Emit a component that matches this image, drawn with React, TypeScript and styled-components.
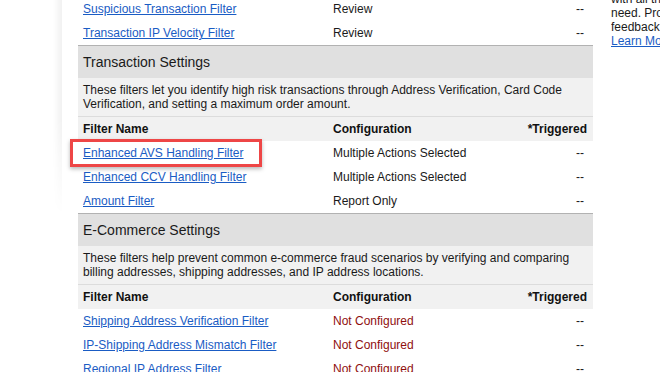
import React from "react";
import styled, { createGlobalStyle } from "styled-components";

const Global = createGlobalStyle`
  html, body {
    margin: 0;
    padding: 0;
    background: #ffffff;
    overflow: hidden;
    width: 660px;
    height: 372px;
  }
  body {
    font-family: "Liberation Sans", Arial, sans-serif;
    font-size: 12px;
    color: #1a1a1a;
  }
`;

const Page = styled.div`
  display: flex;
  align-items: flex-start;
  width: 660px;
  height: 372px;
  overflow: hidden;
`;

const Gutter = styled.div`
  flex: 0 0 78px;
  display: flex;
  justify-content: flex-end;
  padding-right: 16px;
  box-sizing: border-box;
`;

const EdgeShadow = styled.div`
  width: 9px;
  height: 215px;
  background: linear-gradient(to right, rgba(0, 0, 0, 0), rgba(0, 0, 0, 0.055));
  -webkit-mask-image: linear-gradient(to bottom, #000 55%, transparent 100%);
  mask-image: linear-gradient(to bottom, #000 55%, transparent 100%);
`;

const Main = styled.div`
  flex: 0 0 515px;
  margin-top: -3px;
`;

const Row = styled.div<{ $head?: boolean }>`
  display: grid;
  grid-template-columns: 250px 1fr 110px;
  height: 24px;
  align-items: center;
  background: ${(p) => (p.$head ? "#f1f1f1" : "#ffffff")};
  font-weight: ${(p) => (p.$head ? "bold" : "normal")};
  color: ${(p) => (p.$head ? "#111" : "#1a1a1a")};
  line-height: 14px;
`;

const Cell = styled.div<{ $align?: "left" | "right"; $tone?: "warn" }>`
  position: relative;
  padding: 0 5px;
  text-align: ${(p) => (p.$align === "right" ? "right" : "left")};
  color: ${(p) => (p.$tone === "warn" ? "#8f0f0f" : "inherit")};
  white-space: nowrap;
`;

const TriggerCell = styled(Cell)<{ $head?: boolean }>`
  text-align: right;
  padding-right: ${(p) => (p.$head ? "6px" : "9px")};
`;

const FilterLink = styled.a`
  color: #1a5cc4;
  text-decoration: underline;
  cursor: pointer;
`;

const Highlight = styled.span`
  position: absolute;
  left: -8px;
  top: -7px;
  width: 192px;
  height: 28px;
  box-sizing: border-box;
  border: 3px solid #ee4646;
  box-shadow: 0 2px 4px rgba(0, 0, 0, 0.28);
  pointer-events: none;
`;

const Section = styled.section`
  border-top: 1px solid #b2b2b2;
  border-bottom: 1px solid #b2b2b2;
  & + & {
    border-top: none;
  }
`;

const SectionHeader = styled.h2`
  margin: 0;
  height: 32px;
  display: flex;
  align-items: center;
  padding: 0 5px;
  background: #e0e0e0;
  font-size: 14px;
  font-weight: normal;
  color: #1a1a1a;
`;

const Description = styled.p`
  margin: 0;
  padding: 5px 5px;
  height: 39px;
  box-sizing: border-box;
  background: #f1f1f1;
  line-height: 14px;
  color: #1a1a1a;
  border-bottom: 1px solid #dcdcdc;
`;

const Spacer = styled.div`
  flex: 0 0 18px;
`;

const Aside = styled.div`
  flex: 1 1 0;
  min-width: 0;
  overflow: hidden;
  margin-top: -8px;
  line-height: 14px;
  white-space: nowrap;
  color: #1a1a1a;
`;

const AsideLink = styled.a`
  color: #1a5cc4;
  text-decoration: underline;
`;

type FilterRow = { name: string; config: string; warn?: boolean; highlight?: boolean };

const FilterTable: React.FC<{ rows: FilterRow[] }> = ({ rows }) => (
  <>
    <Row $head>
      <Cell>Filter Name</Cell>
      <Cell>Configuration</Cell>
      <TriggerCell $head>*Triggered</TriggerCell>
    </Row>
    {rows.map((r) => (
      <Row key={r.name}>
        <Cell>
          <FilterLink>{r.name}</FilterLink>
          {r.highlight && <Highlight />}
        </Cell>
        <Cell $tone={r.warn ? "warn" : undefined}>{r.config}</Cell>
        <TriggerCell>--</TriggerCell>
      </Row>
    ))}
  </>
);

export default function App() {
  return (
    <>
      <Global />
      <Page>
        <Gutter>
          <EdgeShadow />
        </Gutter>
        <Main>
          <Row>
            <Cell>
              <FilterLink>Suspicious Transaction Filter</FilterLink>
            </Cell>
            <Cell>Review</Cell>
            <TriggerCell>--</TriggerCell>
          </Row>
          <Row>
            <Cell>
              <FilterLink>Transaction IP Velocity Filter</FilterLink>
            </Cell>
            <Cell>Review</Cell>
            <TriggerCell>--</TriggerCell>
          </Row>
          <Section>
            <SectionHeader>Transaction Settings</SectionHeader>
            <Description>
              These filters let you identify high risk transactions through Address Verification, Card Code
              Verification, and setting a maximum order amount.
            </Description>
            <FilterTable
              rows={[
                { name: "Enhanced AVS Handling Filter", config: "Multiple Actions Selected", highlight: true },
                { name: "Enhanced CCV Handling Filter", config: "Multiple Actions Selected" },
                { name: "Amount Filter", config: "Report Only" },
              ]}
            />
          </Section>
          <Section>
            <SectionHeader>E-Commerce Settings</SectionHeader>
            <Description>
              These filters help prevent common e-commerce fraud scenarios by verifying and comparing billing
              addresses, shipping addresses, and IP address locations.
            </Description>
            <FilterTable
              rows={[
                { name: "Shipping Address Verification Filter", config: "Not Configured", warn: true },
                { name: "IP-Shipping Address Mismatch Filter", config: "Not Configured", warn: true },
                { name: "Regional IP Address Filter", config: "Not Configured", warn: true },
              ]}
            />
          </Section>
        </Main>
        <Spacer />
        <Aside>
          with all the tools you
          <br />
          need. Provide your
          <br />
          feedback and help us
          <br />
          <AsideLink>Learn More</AsideLink>
        </Aside>
      </Page>
    </>
  );
}
